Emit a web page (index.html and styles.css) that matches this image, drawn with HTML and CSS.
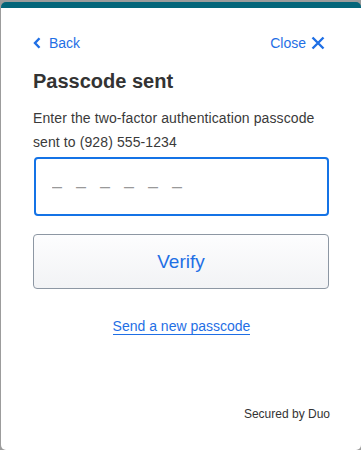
FILE: index.html
```html
<!DOCTYPE html>
<html>
<head>
<meta charset="utf-8">
<link rel="stylesheet" href="styles.css">
</head>
<body>
<div class="card">
  <div class="content">
    <nav class="nav">
      <a class="nav-link back" href="#">
        <svg class="chev" width="8" height="12" viewBox="0 0 8 12"><path d="M6.5 1.2 L2 6 L6.5 10.8" fill="none" stroke="#1f6fe5" stroke-width="2.4"/></svg>
        <span>Back</span>
      </a>
      <a class="nav-link close" href="#">
        <span>Close</span>
        <svg class="x" width="14" height="14" viewBox="0 0 14 14"><path d="M1.5 1.5 L12.5 12.5 M12.5 1.5 L1.5 12.5" fill="none" stroke="#1f6fe5" stroke-width="2.4"/></svg>
      </a>
    </nav>
    <h1 class="title">Passcode sent</h1>
    <p class="desc">Enter the two-factor authentication passcode sent to (928) 555-1234</p>
    <input class="code" type="text" placeholder="––––––">
    <button class="verify">Verify</button>
    <div class="resend-row"><a class="resend" href="#">Send a new passcode</a></div>
    <div class="footer">Secured by Duo</div>
  </div>
</div>
</body>
</html>
```

FILE: styles.css
```css
html, body {
  margin: 0;
  padding: 0;
}
body {
  background: #9c9c9c;
  font-family: "Liberation Sans", Arial, sans-serif;
  width: 361px;
  height: 450px;
  overflow: hidden;
}
.card {
  margin: 2px 0 0 1px;
  height: 448px;
  background: #fff;
  border-radius: 5px;
  border-top: 6px solid #04667a;
  box-sizing: border-box;
  display: flex;
  flex-direction: column;
}
.content {
  flex: 1;
  display: flex;
  flex-direction: column;
  padding: 0 31px 0 32px;
}
.nav {
  display: flex;
  justify-content: space-between;
  align-items: center;
  margin-top: 26px;
  height: 18px;
}
.nav-link {
  display: flex;
  align-items: center;
  color: #1f6fe5;
  text-decoration: none;
  font-size: 14px;
  line-height: 18px;
}
.back .chev {
  margin-right: 8px;
}
.close {
  margin-right: 5px;
}
.close .x {
  margin-left: 5px;
}
.title {
  margin: 17px 0 0 0;
  font-size: 20px;
  line-height: 24px;
  font-weight: bold;
  color: #333;
}
.desc {
  margin: 13px 0 0 0;
  font-size: 14px;
  line-height: 24px;
  letter-spacing: 0.1px;
  color: #3a3a3a;
}
.code {
  margin: 3px 0 0 1px;
  width: 295px;
  height: 59px;
  box-sizing: border-box;
  border: 2px solid #1473e6;
  border-radius: 4px;
  padding: 0 0 0 16px;
  font-family: "Liberation Sans", Arial, sans-serif;
  font-size: 18px;
  letter-spacing: 14px;
  outline: none;
}
.code::placeholder {
  color: #999;
}
.verify {
  margin-top: 18px;
  width: 296px;
  height: 55px;
  box-sizing: border-box;
  border: 1px solid #8d97a3;
  border-radius: 4px;
  background: linear-gradient(#fdfdfe, #f2f3f5);
  color: #1f6fe5;
  font-family: "Liberation Sans", Arial, sans-serif;
  font-size: 19px;
  padding: 0;
}
.resend-row {
  margin-top: 29px;
  display: flex;
  justify-content: center;
}
.resend {
  display: inline-block;
  font-size: 14px;
  line-height: 16px;
  color: #1f6fe5;
  text-decoration: none;
  border-bottom: 1.5px solid #1f6fe5;
}
.footer {
  margin-top: auto;
  margin-bottom: 29px;
  text-align: right;
  font-size: 12px;
  line-height: 14px;
  color: #333;
}
```
